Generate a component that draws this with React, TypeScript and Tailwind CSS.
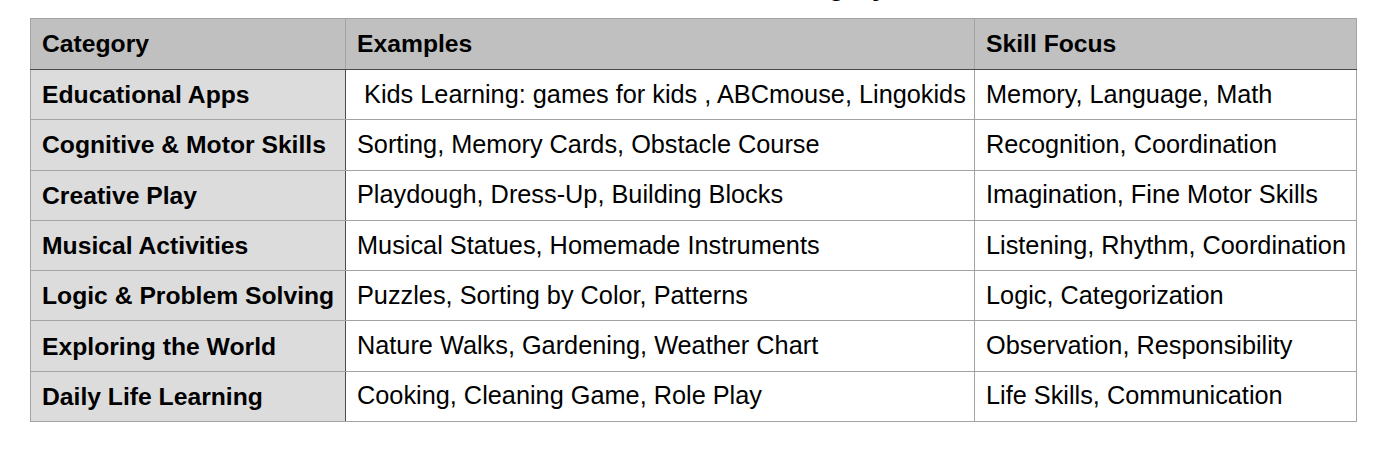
import React from "react";

const rows: [string, string, string][] = [
  ["Educational Apps", "\u00a0Kids Learning: games for kids , ABCmouse, Lingokids", "Memory, Language, Math"],
  ["Cognitive & Motor Skills", "Sorting, Memory Cards, Obstacle Course", "Recognition, Coordination"],
  ["Creative Play", "Playdough, Dress-Up, Building Blocks", "Imagination, Fine Motor Skills"],
  ["Musical Activities", "Musical Statues, Homemade Instruments", "Listening, Rhythm, Coordination"],
  ["Logic & Problem Solving", "Puzzles, Sorting by Color, Patterns", "Logic, Categorization"],
  ["Exploring the World", "Nature Walks, Gardening, Weather Chart", "Observation, Responsibility"],
  ["Daily Life Learning", "Cooking, Cleaning Game, Role Play", "Life Skills, Communication"],
];

export default function App() {
  return (
    <div className="w-[1388px] h-[458px] bg-white overflow-hidden text-black" style={{ fontFamily: '"Liberation Sans", Arial, sans-serif' }}>
      <div className="flex justify-end pr-[501px] mt-[-27px] h-[27px] leading-[27px] text-[27px] font-bold whitespace-nowrap">
        Activities Sorted Under Category
      </div>
      <table className="ml-[30px] mt-[18px] border-collapse table-fixed w-[1326px] text-[25.3px]">
        <colgroup>
          <col className="w-[315px]" />
          <col className="w-[629px]" />
          <col className="w-[382px]" />
        </colgroup>
        <thead>
          <tr className="h-[51px] bg-[#bfc0bf] font-bold text-[24.7px]">
            <td className="border border-[#a3a3a3] border-b-[#4a4a4a] px-[11px] align-middle">Category</td>
            <td className="border border-[#a3a3a3] border-b-[#4a4a4a] px-[11px] align-middle">Examples</td>
            <td className="border border-[#a3a3a3] border-b-[#4a4a4a] px-[11px] align-middle">Skill Focus</td>
          </tr>
        </thead>
        <tbody>
          {rows.map(([a, b, c]) => (
            <tr key={a} className="h-[50.3px]">
              <td className="bg-[#dcdcdc] font-bold text-[24.7px] border border-[#a3a3a3] border-r-[#4a4a4a] px-[11px] align-middle whitespace-nowrap">{a}</td>
              <td className="border border-[#a3a3a3] px-[11px] align-middle whitespace-nowrap">{b}</td>
              <td className="border border-[#a3a3a3] px-[11px] align-middle whitespace-nowrap">{c}</td>
            </tr>
          ))}
        </tbody>
      </table>
    </div>
  );
}
